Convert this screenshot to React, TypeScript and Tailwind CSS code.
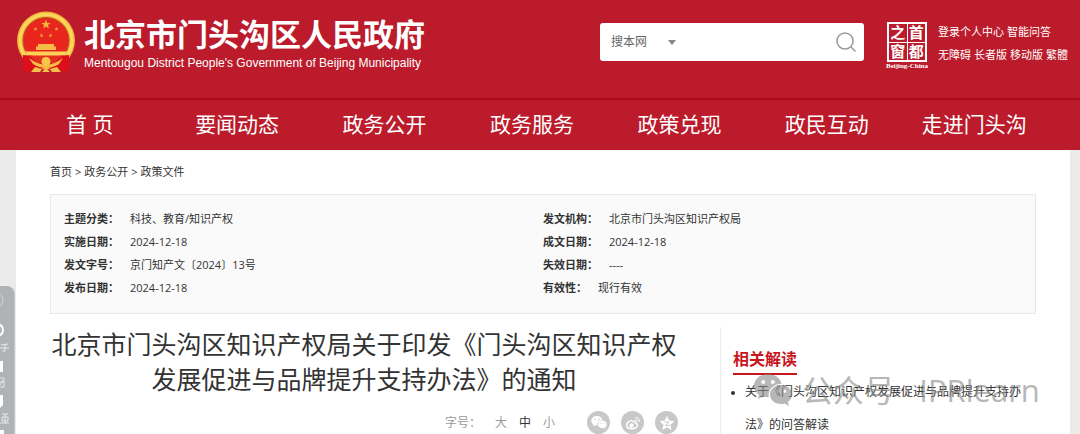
import { useState } from "react"

interface DocField { label: string; value: string }

const FONT = "font-['Open_Sans','Noto_Sans_CJK_SC',sans-serif]"

const NAV = ["首 页", "要闻动态", "政务公开", "政务服务", "政策兑现", "政民互动", "走进门头沟"]
const CRUMBS = ["首页", "政务公开", "政策文件"]

const FIELDS: DocField[] = [
  { label: "主题分类：", value: "科技、教育/知识产权" },
  { label: "发文机构：", value: "北京市门头沟区知识产权局" },
  { label: "实施日期：", value: "2024-12-18" },
  { label: "成文日期：", value: "2024-12-18" },
  { label: "发文字号：", value: "京门知产文〔2024〕13号" },
  { label: "失效日期：", value: "----" },
  { label: "发布日期：", value: "2024-12-18" },
  { label: "有效性：", value: "现行有效" },
]

const SIZES = ["大", "中", "小"]

const STAR = "M0 -5L1.2 -1.6L4.8 -1.6L1.9 .6L2.9 4L0 2L-2.9 4L-1.9 .6L-4.8 -1.6L-1.2 -1.6Z"

const Emblem = () => (
  <svg viewBox="0 0 60 62" className="h-[62px] w-[60px] shrink-0" aria-hidden="true">
    <circle cx="30" cy="29.5" r="29" fill="#f0b53a" />
    <circle cx="30" cy="29.5" r="26" fill="none" stroke="#fbd55c" strokeWidth="3" />
    <circle cx="30" cy="29.5" r="23" fill="#e8261e" stroke="#b5561c" strokeWidth="1" />
    <path d={STAR} transform="translate(30 13.5)" fill="#f2b53d" />
    <g fill="#e9a03a">
      <path d={STAR} transform="translate(19.5 18) scale(.45)" />
      <path d={STAR} transform="translate(40.5 18) scale(.45)" />
      <path d={STAR} transform="translate(25.5 24.5) scale(.45)" />
      <path d={STAR} transform="translate(34.5 24.5) scale(.45)" />
    </g>
    <path d="M22 33H38V35.500H40V39H20V35.500H22Z" fill="#f5bd45" />
    <path d="M9 40.500H51L49 44.500H11Z" fill="#fbd15a" />
    <path d="M7 44L18 45L30 51L42 45L53 44L53 60L42 61L30 56L18 61L7 60Z" fill="#dc0f1a" />
    <path d="M14 45H46L38 52H22Z" fill="#e5301f" />
    <circle cx="30" cy="50.500" r="4.500" fill="#f8c648" />
    <path d="M13 47Q21 53 30 54Q39 53 47 47L43 53Q37 57 30 57Q23 57 17 53Z" fill="#f6bf43" />
    <path d="M15 61L19 56L26 58L24 61ZM45 61L41 56L34 58L36 61ZM26 61L30 57L34 61Z" fill="#f3c04b" />
  </svg>
)

const WeChat = ({ className }: { className: string }) => (
  <svg viewBox="0 0 38 32" className={className} fill="currentColor" aria-hidden="true">
    <path fillRule="evenodd" d="M14 0C6.300 0 0 5.200 0 11.800c0 3.700 2 6.900 5.100 9.100L3.800 25l5-2.500c1.700.5 3.400.8 5.200.8h.9C13.300 16 19 10 27.600 9.700 26.200 4 20.700 0 14 0ZM9.200 6a2 2 0 1 1 0 4 2 2 0 0 1 0-4Zm9.600 0a2 2 0 1 1 0 4 2 2 0 0 1 0-4Z" />
    <path fillRule="evenodd" d="M27 11c-6.200 0-11 4.200-11 9.500S20.800 30 27 30c1.300 0 2.600-.2 3.800-.6L35 32l-1.200-4c2.600-1.800 4.200-4.500 4.200-7.500C38 15.200 33.200 11 27 11Zm-3.800 4.800a1.500 1.500 0 1 1 0 3 1.500 1.500 0 0 1 0-3Zm7.600 0a1.500 1.500 0 1 1 0 3 1.500 1.500 0 0 1 0-3Z" />
  </svg>
)

const Weibo = () => (
  <svg viewBox="0 0 16 16" className="size-4" fill="none" stroke="currentColor" aria-hidden="true">
    <path d="M7.500 5.500C4.500 5.200 1.500 8 1.500 10.300c0 2.200 2.500 3.500 5.300 3.500 3.400 0 5.700-1.900 5.700-3.800 0-1.300-1-1.800-2.200-2 .6-1.700-.9-2.300-3-1.300" strokeWidth="1.500" />
    <circle cx="6.600" cy="10.500" r="2.200" fill="currentColor" stroke="none" />
    <path d="M10.500 2.500c2.600-.4 4.300 1.600 3.800 4M10.600 4.700c1.200-.2 1.900.6 1.700 1.700" strokeWidth="1" strokeLinecap="round" />
  </svg>
)

const QZone = () => (
  <svg viewBox="0 0 16 16" className="size-4" aria-hidden="true">
    <path d="M8 .8L10.200 5.600L15.400 6.200L11.500 9.700L12.600 14.900L8 12.200L3.400 14.900L4.500 9.700L.6 6.200L5.800 5.600Z" fill="currentColor" />
    <path d="M5.500 7H10L6.500 10.400H11" fill="none" stroke="#c8c8c8" strokeWidth="1" />
  </svg>
)

const Seal = () => (
  <a href="#beijing" className="flex w-[46px] flex-col items-center pt-[2px] text-white" aria-label="首都之窗">
    <div className="grid size-[40px] grid-cols-2 gap-px border-2 border-white bg-white">
      {["之", "首", "窗", "都"].map((c) => (
        <span key={c} className="flex items-center justify-center bg-[#bb1b2b] text-[15px] leading-none font-bold">{c}</span>
      ))}
    </div>
    <span className="font-['Liberation_Serif',serif] text-[7px] leading-[9px] font-bold whitespace-nowrap">Beijing-China</span>
  </a>
)

const Header = () => (
  <header className="bg-[#bb1b2b] text-white">
    <div className="flex h-[98px] items-start pr-3 pl-4">
      <a href="#home" className="flex pt-[11px]">
        <Emblem />
        <div className="pt-1 pl-2 whitespace-nowrap">
          <h1 className="text-[31px] leading-[38px] font-bold">北京市门头沟区人民政府</h1>
          <p className="font-['Liberation_Sans',sans-serif] text-[12px] leading-5">
            Mentougou District People's Government of Beijing Municipality
          </p>
        </div>
      </a>

      <form className="mt-[23px] ml-auto flex h-[38px] w-[264px] items-center rounded-[3px] bg-white px-2" onSubmit={(e) => e.preventDefault()}>
        <div className="relative flex items-center">
          <select aria-label="搜索范围" className="w-[68px] appearance-none bg-transparent pl-[3px] text-[12px] text-[#666]">
            <option>搜本网</option>
          </select>
          <svg viewBox="0 0 8 5" className="pointer-events-none absolute right-0 h-[5px] w-2" aria-hidden="true">
            <path d="M0 0H8L4 5Z" fill="#888" />
          </svg>
        </div>
        <input aria-label="搜索" className="h-full min-w-0 flex-1 px-2 text-[12px] text-[#666] outline-none" />
        <button aria-label="提交搜索">
          <svg viewBox="0 0 20 20" className="size-5" fill="none" stroke="#999" strokeWidth="1.500" aria-hidden="true">
            <circle cx="9" cy="9" r="8" />
            <path d="M15 15L19.500 19.500" />
          </svg>
        </button>
      </form>

      <div className="ml-5 flex pt-5">
        <Seal />
        <div className="ml-2 text-[11px] leading-[23px] whitespace-nowrap">
          <p className="flex gap-[3px]">
            <a href="#me">登录个人中心</a>
            <a href="#qa">智能问答</a>
          </p>
          <p className="flex gap-[3px]">
            <a href="#a11y">无障碍</a>
            <a href="#elder">长者版</a>
            <a href="#mobile">移动版</a>
            <a href="#hant">繁體</a>
          </p>
        </div>
      </div>
    </div>

    <nav className="flex h-[52px] border-t-2 border-[#ab0a18] pr-8 pl-4">
      {NAV.map((n) => (
        <a key={n} href="#nav" className="flex flex-1 items-center justify-center text-[21px] whitespace-nowrap">{n}</a>
      ))}
    </nav>
  </header>
)

const Article = () => {
  const [size, setSize] = useState("中")

  return (
    <article className="min-w-0 flex-1">
      <h2 className="text-center text-[25px] leading-[35px] text-[#333]">
        北京市门头沟区知识产权局关于印发《门头沟区知识产权<br />发展促进与品牌提升支持办法》的通知
      </h2>
      <div className="mt-[14px] flex items-center justify-end text-[12px] text-[#999]">
        <span>字号：</span>
        <div className="ml-[14px] flex gap-3">
          {SIZES.map((s) => (
            <button key={s} onClick={() => setSize(s)} className={s === size ? "text-[#333]" : ""}>{s}</button>
          ))}
        </div>
        <div className="ml-8 flex gap-[11px] text-white">
          <button aria-label="微信" className="flex size-[23px] items-center justify-center rounded-full bg-[#c8c8c8]">
            <WeChat className="h-[13px] w-4" />
          </button>
          <button aria-label="微博" className="flex size-[23px] items-center justify-center rounded-full bg-[#c8c8c8]"><Weibo /></button>
          <button aria-label="QQ空间" className="flex size-[23px] items-center justify-center rounded-full bg-[#c8c8c8]"><QZone /></button>
        </div>
      </div>
    </article>
  )
}

const Related = () => (
  <aside className="relative ml-[42px] w-[316px] border-l border-[#eee] pl-3">
    <h3 className="mt-[18px] inline-block border-b-2 border-[#c8161d] text-[16px] leading-7 font-bold text-[#c8161d]">相关解读</h3>
    <ul className="list-disc pl-3 text-[12px] leading-[33px] text-[#333] marker:text-[10px]">
      <li><a href="#related">关于《门头沟区知识产权发展促进与品牌提升支持办法》的问答解读</a></li>
    </ul>

    {/* watermark */}
    <div className="pointer-events-none absolute top-[43px] left-[33px] flex items-center gap-[10px] whitespace-nowrap text-[#888] opacity-60">
      <WeChat className="h-8 w-[38px]" />
      <span className="text-[31px] leading-10">公众号 · IPRlearn</span>
    </div>
  </aside>
)

/* tool bar, mostly hidden past the left edge */
const SideBar = () => (
  <div className="absolute top-[286px] left-0 h-[148px] w-[15px] overflow-hidden rounded-tr-lg border-r border-[#c4c6c7] bg-[#b0b3b5]">
    <svg viewBox="0 0 14 148" className="h-[148px] w-[14px]" fill="none" stroke="#fff" aria-hidden="true">
      <path d="M-2 10Q3 8 3 15Q3 19 -2 22" stroke="#d3d5d6" />
      <path d="M-3 38A6 6 0 0 1 -3 50" strokeWidth="2" />
      <path d="M1 59L8 58M0 62H9M5 58V65H2" stroke="#e6e7e8" />
      <path d="M0 75H3V86H0Z" fill="#fff" stroke="none" />
      <path d="M0 92H4V101H0M0 96H4M0 99L3 94" stroke="#e6e7e8" />
      <path d="M0 109H3V119L0 122Z" fill="#fff" stroke="none" />
      <path d="M2 128H8M2 131H8V135H2ZM0 137H9M5 128V137" stroke="#e6e7e8" />
      <path d="M0 144H4V148H0Z" fill="#fff" stroke="none" />
    </svg>
  </div>
)

export default function App() {
  return (
    <div className={`relative h-screen overflow-hidden bg-[#ebebeb] ${FONT}`}>
      <Header />
      <main className="mr-[10px] ml-4 min-h-screen bg-white pr-[34px] pl-[34px]">
        <div className="flex h-11 items-center gap-[3px] text-[11px] text-[#333]">
          {CRUMBS.map((c, i) => (
            <span key={c} className="flex gap-[3px]">
              {i > 0 && <span>&gt;</span>}
              <a href="#crumb">{c}</a>
            </span>
          ))}
        </div>

        <dl className="grid grid-cols-2 border border-[#e8e8e8] bg-[#fafafa] px-[13px] pt-3 pb-[14px] text-[11px] leading-[23px] text-[#333]">
          {FIELDS.map((f) => (
            <div key={f.label} className="flex gap-[11px]">
              <dt className="font-bold">{f.label}</dt>
              <dd>{f.value}</dd>
            </div>
          ))}
        </dl>

        <div className="mt-[13px] flex">
          <Article />
          <Related />
        </div>
      </main>
      <SideBar />
    </div>
  )
}
